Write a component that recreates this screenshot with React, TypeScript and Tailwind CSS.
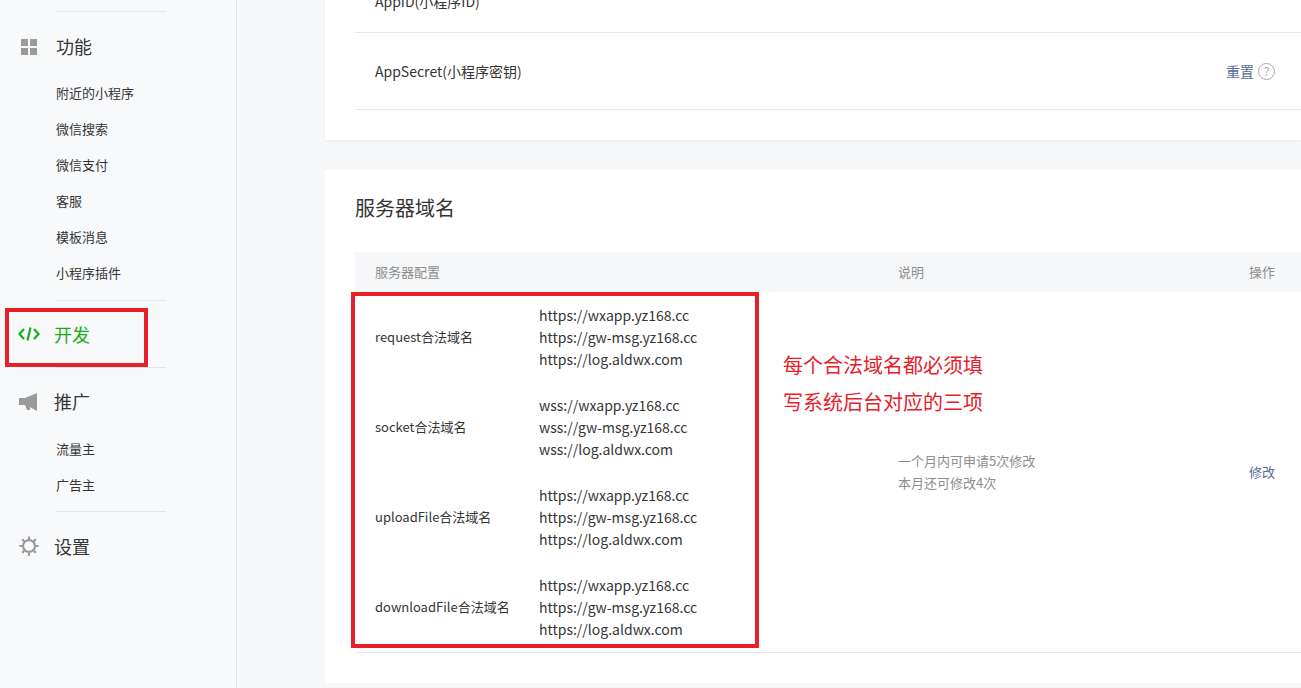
import React from 'react';

const font = { fontFamily: '"Noto Sans CJK SC", "Liberation Sans", sans-serif' };

const GridIcon = () => (
  <svg width="18" height="18" viewBox="0 0 18 18" fill="#9a9a9a">
    <rect x="1" y="1" width="7" height="7" />
    <rect x="10" y="1" width="7" height="7" />
    <rect x="1" y="10" width="7" height="7" />
    <rect x="10" y="10" width="7" height="7" />
  </svg>
);

const CodeIcon = () => (
  <svg width="22" height="18" viewBox="0 0 22 18" fill="none" stroke="#1aad19" strokeWidth="2.2">
    <path d="M6 4 L1.5 9 L6 14" />
    <path d="M16 4 L20.5 9 L16 14" />
    <path d="M12.5 2.5 L9.5 15.5" />
  </svg>
);

const HornIcon = () => (
  <svg width="22" height="20" viewBox="0 0 22 20" fill="#9a9a9a">
    <path d="M1 6 H7 L19 1 V19 L12 15 V18 H9 L7 13 H1 Z" />
  </svg>
);

const GearIcon = () => (
  <svg width="22" height="22" viewBox="0 0 24 24" fill="none" stroke="#9a9a9a" strokeWidth="2.4">
    <circle cx="12" cy="12" r="6.5" />
    <path d="M12 1.5v3M12 19.5v3M1.5 12h3M19.5 12h3M4.6 4.6l2.1 2.1M17.3 17.3l2.1 2.1M4.6 19.4l2.1-2.1M17.3 6.7l2.1-2.1" />
  </svg>
);

const SubItem = ({ label }: { label: string }) => (
  <div className="h-9 flex items-center pl-14 text-[13px] text-[#353535]">{label}</div>
);

const Divider = () => <div className="ml-14 w-[110px] border-t border-[#e4e6ea]" />;

const rows = [
  { name: 'request合法域名', urls: ['https://wxapp.yz168.cc', 'https://gw-msg.yz168.cc', 'https://log.aldwx.com'] },
  { name: 'socket合法域名', urls: ['wss://wxapp.yz168.cc', 'wss://gw-msg.yz168.cc', 'wss://log.aldwx.com'] },
  { name: 'uploadFile合法域名', urls: ['https://wxapp.yz168.cc', 'https://gw-msg.yz168.cc', 'https://log.aldwx.com'] },
  { name: 'downloadFile合法域名', urls: ['https://wxapp.yz168.cc', 'https://gw-msg.yz168.cc', 'https://log.aldwx.com'] },
];

export default function App() {
  return (
    <div className="flex h-[688px] overflow-hidden bg-[#f6f7f9]" style={font}>
      <aside className="relative w-[237px] shrink-0 bg-[#f8f9fb] border-r border-[#e4e6ea] pt-[11px]">
        <Divider />
        <div className="h-[69px] flex items-center gap-[18px] pl-5 text-[18px] text-[#353535]"><GridIcon />功能</div>
        <div className="-mt-[6px]">
          <SubItem label="附近的小程序" />
          <SubItem label="微信搜索" />
          <SubItem label="微信支付" />
          <SubItem label="客服" />
          <SubItem label="模板消息" />
          <SubItem label="小程序插件" />
        </div>
        <div className="mt-[9px]"><Divider /></div>
        <div className="h-[66px] flex items-center gap-[14px] pl-[18px] text-[18px] text-[#1aad19]"><CodeIcon />开发</div>
        <Divider />
        <div className="h-[67px] flex items-center gap-[14px] pl-[18px] text-[18px] text-[#353535]"><HornIcon />推广</div>
        <div className="-mt-[4px]">
          <SubItem label="流量主" />
          <SubItem label="广告主" />
        </div>
        <div className="mt-[8px]"><Divider /></div>
        <div className="h-[68px] flex items-center gap-[14px] pl-[18px] text-[18px] text-[#353535]"><GearIcon />设置</div>
        <div className="absolute left-[5px] top-[308px] w-[143px] h-[59px] border-[4px] border-[#e8202a]" />
      </aside>

      <main className="flex-1 pl-[88px] flex flex-col gap-[30px]">
        <section className="bg-white -mt-[30px] pl-[30px] pb-[30px] shadow-[0_1px_2px_rgba(0,0,0,0.06)]">
          <div className="h-[63px] flex items-center pl-5 text-[14px] text-[#353535] border-b border-[#e7e7eb]">AppID(小程序ID)</div>
          <div className="h-[77px] flex items-center justify-between pl-5 pr-[26px] text-[14px] text-[#353535] border-b border-[#e7e7eb]">
            <span>AppSecret(小程序密钥)</span>
            <span className="flex items-center gap-1">
              <span className="text-[#576b95]">重置</span>
              <span className="w-[17px] h-[17px] rounded-full border border-[#aaa] text-[#aaa] text-[12px] flex items-center justify-center">?</span>
            </span>
          </div>
        </section>

        <section className="relative bg-white pl-[30px] pt-[23px] pb-[30px]">
          <h2 className="text-[20px] text-[#353535] font-normal h-[30px] leading-[30px]">服务器域名</h2>
          <div className="mt-[29px] h-[40px] bg-[#f6f7f9] flex items-center pl-5 pr-[26px] text-[13px] text-[#8d8d8d]">
            <span className="w-[523px]">服务器配置</span>
            <span className="flex-1">说明</span>
            <span>操作</span>
          </div>
          <div className="flex border-b border-[#e7e7eb] pr-[26px]">
            <div className="w-[543px] pl-5">
              {rows.map((r) => (
                <div key={r.name} className="h-[90px] flex items-center text-[13px] text-[#353535]">
                  <span className="w-[164px]">{r.name}</span>
                  <div className="text-[14px] leading-[22px]">
                    {r.urls.map((u) => <div key={u}>{u}</div>)}
                  </div>
                </div>
              ))}
            </div>
            <div className="flex-1 flex items-center text-[13px] text-[#8d8d8d] leading-[22px]">
              <div>一个月内可申请5次修改<br />本月还可修改4次</div>
            </div>
            <div className="flex items-center text-[13px] text-[#576b95]">修改</div>
          </div>
          <div className="absolute left-[26px] top-[122px] w-[408px] h-[356px] border-[4px] border-[#e8202a]" />
          <div className="absolute left-[458px] top-[176px] text-[20px] leading-[37px] text-[#e8202a]">
            每个合法域名都必须填<br />写系统后台对应的三项
          </div>
        </section>
      </main>
    </div>
  );
}
